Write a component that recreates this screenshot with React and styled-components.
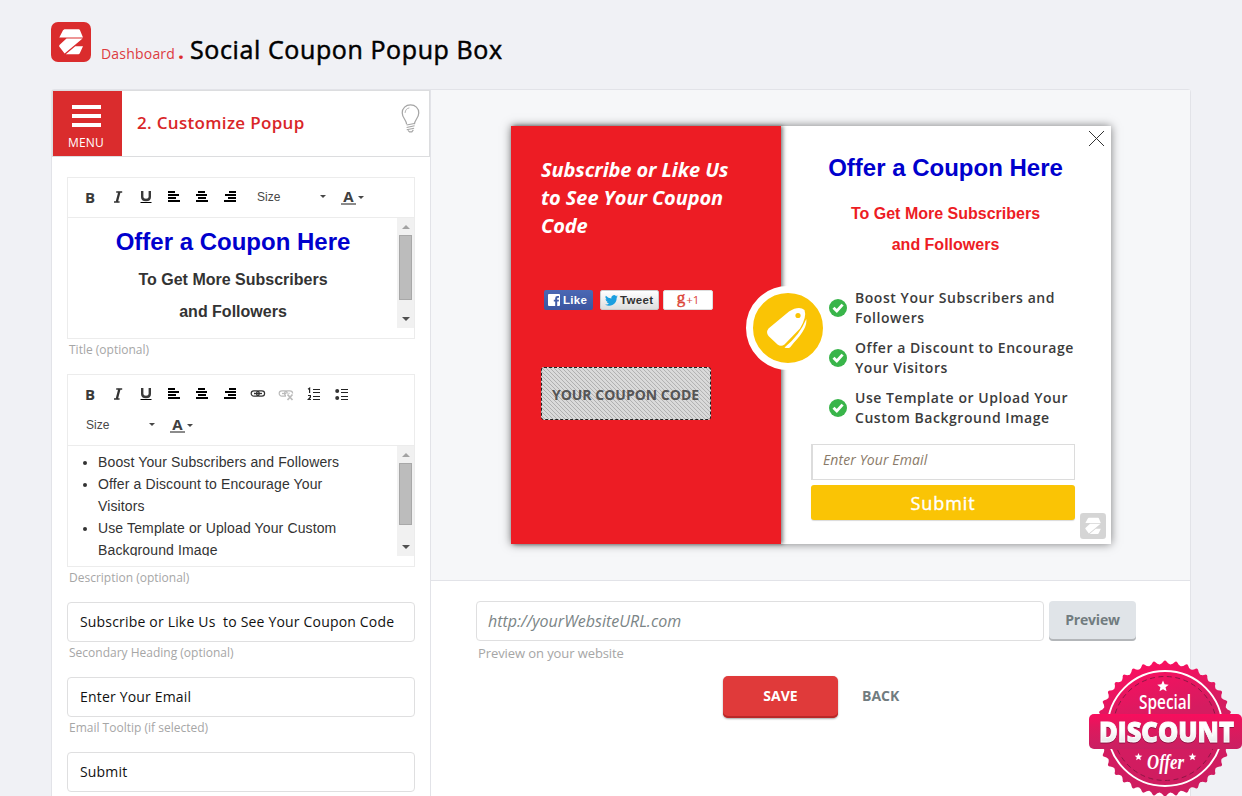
import React from "react";
import styled, { createGlobalStyle, css } from "styled-components";

const sans = `"Open Sans", "Noto Sans", sans-serif`;
const arial = `"Liberation Sans", Arial, sans-serif`;

const GlobalStyle = createGlobalStyle`
  * { box-sizing: border-box; }
  body {
    margin: 0;
    background: #f0f1f5;
    font-family: ${sans};
    overflow: hidden;
  }
`;

const Page = styled.div`
  width: 1242px;
  height: 796px;
  overflow: hidden;
`;

const Header = styled.header`
  display: flex;
  align-items: flex-start;
  height: 89px;
  padding: 22px 0 0 51px;
`;

const Crumbs = styled.div`
  display: flex;
  align-items: baseline;
  margin: 10px 0 0 10px;
  white-space: nowrap;
`;

const CrumbLink = styled.a`
  color: #dd3b3f;
  font-size: 14px;
  line-height: 34px;
  letter-spacing: 0.2px;
`;

const CrumbDot = styled.span`
  width: 5px;
  margin: 0 7px 0 3px;
  color: #dc2c2c;
  font-size: 21px;
  line-height: 34px;
  font-weight: 700;
`;

const PageTitle = styled.h1`
  margin: 0;
  color: #000;
  font-size: 25px;
  font-weight: 400;
  line-height: 34px;
  letter-spacing: 0.6px;
  -webkit-text-stroke: 0.5px #000;
`;

const Workspace = styled.main`
  display: flex;
  width: 1140px;
  height: 720px;
  margin-left: 51px;
  background: #fff;
  border: 1px solid #e2e3e8;
  border-radius: 3px;
`;

const Sidebar = styled.aside`
  flex: none;
  width: 379px;
  border-right: 1px solid #e2e3e8;
`;

const StepBar = styled.div`
  display: flex;
  height: 67px;
  border: 1px solid #dcdddf;
`;

const MenuButton = styled.button`
  display: flex;
  flex-direction: column;
  align-items: center;
  width: 69px;
  padding: 14px 0 0;
  background: #da2c2d;
  border: 0;
  color: #fff;
  font: 12px/16px ${sans};
  letter-spacing: 0.2px;
`;

const MenuBars = styled.span`
  display: flex;
  flex-direction: column;
  gap: 5px;
  margin: 0 3px 8px 0;
  i {
    width: 29px;
    height: 4px;
    background: #fff;
  }
`;

const MenuLabel = styled.span`
  margin-right: 3px;
`;

const StepTitle = styled.h2`
  flex: 1;
  margin: 0 0 0 15px;
  color: #d92628;
  font-size: 17px;
  font-weight: 600;
  line-height: 64px;
  letter-spacing: 0.32px;
`;

const BulbWrap = styled.div`
  padding: 12px 9px 0 0;
`;

const Fields = styled.div`
  padding: 20px 15px 0;
`;

const Editor = styled.div`
  width: 348px;
  height: ${(p) => p.$height}px;
  background: #fff;
  border: 1px solid #ececec;
`;

const Toolbar = styled.div`
  display: flex;
  flex-wrap: wrap;
  align-content: flex-start;
  height: ${(p) => p.$height}px;
  padding: 4px 8px 0;
  border-bottom: 1px solid #ececec;
`;

const Tool = styled.span`
  display: flex;
  align-items: center;
  justify-content: center;
  width: 28px;
  height: 30px;
  color: #333;
`;

const BoldGlyph = styled.span`
  color: #3a3a3a;
  font: 700 15px/20px ${sans};
`;

const SizeSelect = styled.span`
  display: flex;
  align-items: center;
  justify-content: space-between;
  width: 82px;
  height: ${(p) => (p.$offset ? 29 : 31)}px;
  margin-left: ${(p) => p.$offset || 0}px;
  padding: 0 3px 0 10px;
  color: #484848;
  font: 12px/14px ${arial};
`;

const Caret = styled.i`
  border: 3px solid transparent;
  border-top-color: #474747;
  border-bottom: 0;
`;

const ColorSelect = styled.span`
  display: flex;
  align-items: center;
  gap: 2px;
  height: ${(p) => (p.$compact ? 30 : 32)}px;
  margin-left: 12px;
`;

const ColorLetter = styled.span`
  width: 15px;
  height: 15px;
  border-bottom: 2px solid #8b8b8b;
  color: #404040;
  font: 700 15px/12px ${sans};
  text-align: center;
`;

const EditArea = styled.div`
  display: flex;
  height: 110px;
  overflow: hidden;
`;

const EditText = styled.div`
  flex: 1;
  color: #333;
  font-family: ${arial};
  white-space: nowrap;
`;

const Scrollbar = styled.div`
  display: flex;
  flex-direction: column;
  align-items: center;
  width: 17px;
  background: #f1f1f1;
`;

const ScrollThumb = styled.div`
  width: 13px;
  height: ${(p) => p.$height}px;
  margin-bottom: auto;
  background: #bcbcbc;
  border: 1px solid #a8a8a8;
`;

const ScrollArrow = styled.i`
  width: 8px;
  height: 4px;
  border: 4px solid transparent;
  ${(p) =>
    p.$up
      ? css`
          margin: 7px 0 6px;
          border-top: 0;
          border-bottom-color: #a3a3a3;
        `
      : css`
          margin: 0 0 7px;
          border-bottom: 0;
          border-top-color: #505050;
        `}
`;

const OfferTitle = styled.div`
  margin-bottom: ${(p) => p.$gap}px;
  color: #0000cd;
  font: 700 24px/28px ${arial};
  text-align: center;
`;

const OfferLine = styled.div`
  color: ${(p) => p.$color || "#333"};
  font: 700 16px/${(p) => p.$line || 32}px ${arial};
  text-align: center;
`;

const TitleText = styled(EditText)`
  padding: 10px 0 0 1px;
`;

const BulletList = styled.ul`
  margin: 5px 0 0;
  padding: 0 0 0 30px;
  color: #333;
  font: 14px/22px ${arial};
  letter-spacing: 0.13px;
`;

const Hint = styled.div`
  height: 22px;
  margin-bottom: 13px;
  padding-left: 2px;
  color: #a6a6a6;
  font-size: 12px;
  line-height: 22px;
  white-space: nowrap;
`;

const TextField = styled.div`
  width: 348px;
  height: 40px;
  padding-left: 12px;
  background: #fff;
  border: 1px solid #dfdfe0;
  border-radius: 4px;
  color: #111;
  font-size: 14px;
  line-height: 38px;
  letter-spacing: 0.18px;
  white-space: pre;
`;

const Content = styled.section`
  flex: 1;
  display: flex;
  flex-direction: column;
`;

const Stage = styled.div`
  height: 491px;
  padding: 36px 0 0 80px;
  background: #f6f7f9;
  border-bottom: 1px solid #e2e3e8;
`;

const Popup = styled.div`
  position: relative;
  display: flex;
  width: 600px;
  height: 418px;
  background: #fff;
  box-shadow: 0 0 9px rgba(0, 0, 0, 0.5);
`;

const PromoSide = styled.div`
  width: 270px;
  padding: 30px 30px 0;
  background: #ed1c24;
  box-shadow: 2px 0 4px rgba(0, 0, 0, 0.5);
`;

const PromoHeading = styled.div`
  height: 134px;
  color: #fff;
  font: italic 700 20px/28px ${sans};
  letter-spacing: -0.08px;
  white-space: nowrap;
`;

const SocialRow = styled.div`
  display: flex;
  height: 77px;
  padding-left: 3px;
`;

const SocialButton = styled.div`
  display: flex;
  align-items: center;
  height: 20px;
  border-radius: 2px;
  font: 700 11.5px/20px ${arial};
`;

const LikeButton = styled(SocialButton)`
  width: 49px;
  margin-right: 7px;
  padding-left: 4px;
  gap: 3px;
  background: linear-gradient(#4b68b4, #3b559f);
  color: #fff;
  letter-spacing: 0.3px;
`;

const TweetButton = styled(SocialButton)`
  width: 59px;
  margin-right: 4px;
  padding-left: 4px;
  gap: 2px;
  border: 1px solid #ccc;
  background: linear-gradient(#fff, #dedede);
  color: #333;
  letter-spacing: 0.35px;
`;

const PlusButton = styled(SocialButton)`
  width: 50px;
  justify-content: center;
  gap: 1px;
  background: #fff;
  border: 1px solid #ddd;
  color: #db4437;
  font: 11.5px/18px ${sans};
  b {
    margin-top: -4px;
    font: 17px/18px "Liberation Serif", serif;
    -webkit-text-stroke: 0.4px #db4437;
  }
`;

const CouponCode = styled.div`
  width: 170px;
  height: 53px;
  border: 1px dashed #222;
  border-radius: 3px;
  background: repeating-linear-gradient(
    45deg,
    #dadada 0,
    #dadada 1.6px,
    #b0b0b0 2.1px,
    #dadada 2.83px
  );
  color: #555;
  font-size: 14px;
  font-weight: 700;
  line-height: 53px;
  text-indent: -1px;
  text-align: center;
  white-space: nowrap;
`;

const TagBadge = styled.div`
  position: absolute;
  left: 235px;
  top: 160px;
  width: 84px;
  height: 84px;
  border: 7px solid #fff;
  border-radius: 50%;
  background: #fac405;
`;

const CloseMark = styled.svg`
  position: absolute;
  right: 7px;
  top: 5px;
`;

const CornerLogo = styled.div`
  position: absolute;
  right: 5px;
  bottom: 5px;
  line-height: 0;
`;

const FormSide = styled.div`
  width: 330px;
  padding: 28px 36px 0 30px;
`;

const FormHeading = styled.div`
  padding-left: 5px;
`;

const Benefits = styled.ul`
  height: 156px;
  margin: 0;
  padding: 28px 0 0 18px;
  list-style: none;
`;

const Benefit = styled.li`
  display: flex;
  align-items: center;
  gap: 8px;
  height: 40px;
  margin-bottom: 10px;
  color: #3b3b3b;
  font-size: 14px;
  font-weight: 600;
  line-height: 20px;
  letter-spacing: 0.55px;
  white-space: nowrap;
`;

const EmailInput = styled.div`
  height: 36px;
  margin: 28px 0 5px;
  padding-left: 10px;
  border: 1px solid #dcdcdc;
  border-left-width: 2px;
  color: #8a7a68;
  font: italic 14px/30px ${sans};
  letter-spacing: 0.1px;
`;

const SubmitButton = styled.div`
  height: 35px;
  background: #fac405;
  border-radius: 3px;
  box-shadow: 0 1px 1px rgba(0, 0, 0, 0.15);
  color: #fff;
  font-size: 18px;
  line-height: 37px;
  letter-spacing: 0.9px;
  text-align: center;
  -webkit-text-stroke: 0.4px #fff;
`;

const PreviewRow = styled.div`
  display: flex;
  padding: 20px 0 0 45px;
  gap: 5px;
`;

const UrlInput = styled.div`
  width: 568px;
  height: 40px;
  padding-left: 11px;
  border: 1px solid #dfdfe0;
  border-radius: 4px;
  color: #7b8586;
  font: italic 16px/38px ${sans};
`;

const PreviewButton = styled.div`
  width: 87px;
  height: 40px;
  background: #e0e4e8;
  border-radius: 4px;
  box-shadow: inset 0 -2px 0 #b3b6b9;
  color: #717c7f;
  font-size: 14px;
  font-weight: 700;
  letter-spacing: -0.2px;
  line-height: 38px;
  text-align: center;
`;

const PreviewHint = styled.div`
  padding-left: 47px;
  color: #a6a6a6;
  font-size: 13px;
  line-height: 24px;
  letter-spacing: -0.09px;
`;

const Actions = styled.div`
  display: flex;
  align-items: flex-start;
  gap: 24px;
  padding: 11px 0 0 292px;
  font-size: 14px;
  font-weight: 700;
  line-height: 40px;
`;

const SaveButton = styled.div`
  width: 115px;
  height: 42px;
  background: #e03a3a;
  border-radius: 5px;
  box-shadow: inset 0 -2px 0 #b92929, 0 1px 2px rgba(0, 0, 0, 0.35);
  color: #fff;
  text-align: center;
`;

const BackLink = styled.div`
  color: #717c7f;
`;

const SealWrap = styled.div`
  position: absolute;
  left: 1088px;
  top: 660px;
  width: 154px;
  height: 136px;
  overflow: hidden;
`;

const BandText = styled.text`
  font-family: ${sans};
  font-size: 29px;
  font-weight: 800;
  filter: drop-shadow(0 1.5px 0.5px #8e1545);
`;

function Logo({ size, color }) {
  return (
    <svg width={size} height={size} viewBox="0 0 40 40">
      <rect width="40" height="40" rx={size > 30 ? 7 : 5} fill={color} />
      <path
        d="M13.4 7.3H27.8Q28.6 7.4 29 8.2L32 15.5H8.3L12 8.3ZM15.5 16.4H31.6L13.6 31.6 8.2 24.4Q8 23.6 8.7 22.8ZM24.3 24.2H32L28.8 31.2Q28.2 32.3 27.4 32.3H14.8Z"
        fill="#fff"
      />
    </svg>
  );
}

function Bulb() {
  return (
    <svg width="19" height="31" viewBox="0 0 20 31" fill="none" stroke="#a5a5a5">
      <path
        strokeWidth="1.3"
        d="M5.9 21.5C5.6 16.8 1.3 14.8 1.3 9.6 1.3 4.6 5 1.2 10 1.2S18.7 4.6 18.7 9.6C18.7 14.8 14.4 16.8 14.1 21.5"
      />
      <path d="M4.3 9.6C4.5 6.5 6.2 4.8 8.8 4.3" strokeWidth="0.9" />
      <path d="M5.9 22.4 14 20.8M5.9 25 14.3 23.2M6 27.3 13.8 25.8M7.3 28 9 29.6H11.4L13 27.5" strokeWidth="1.2" />
    </svg>
  );
}

function Align({ x }) {
  return (
    <svg width="12" height="12" viewBox="0 0 12 12" fill="#000" shapeRendering="crispEdges">
      <rect x={x[0]} y="0" width="7" height="2" />
      <rect x={x[1]} y="3" width="11" height="2" />
      <rect x={x[2]} y="6" width="8" height="2" />
      <rect x="0" y="9" width="12" height="2" />
    </svg>
  );
}

function LinkIcon({ color, cross }) {
  return (
    <svg width="16" height="14" viewBox="0 0 16 14" fill="none" stroke={color} strokeWidth="1.2">
      <rect x="1.2" y="3.8" width="8" height="5.4" rx="2.7" />
      <rect x="6.6" y="3.8" width="8" height="5.4" rx="2.7" />
      <path d="M4 6.5h8" strokeWidth="1.3" />
      {cross && (
        <>
          <path d="M8 6.500H16V14H8Z" fill="#fff" stroke="none" />
          <path d="M9.500 7.500l5 5.500M14.500 7.500l-5 5.500" strokeWidth="1.7" />
        </>
      )}
    </svg>
  );
}

function FormatTools() {
  return (
    <>
      <Tool><BoldGlyph>B</BoldGlyph></Tool>
      <Tool>
        <svg width="14" height="16" viewBox="0 0 14 16">
          <path d="M5.2 3H11.2M3 13H8.6" stroke="#333" strokeWidth="1.7" fill="none" />
          <path d="M8.4 3 5.8 13" stroke="#333" strokeWidth="2.3" />
        </svg>
      </Tool>
      <Tool>
        <svg width="14" height="16" viewBox="0 0 14 16">
          <path d="M3.2 2V8Q3.2 11 7 11T10.8 8V2" stroke="#3a3a3a" strokeWidth="2.4" fill="none" />
          <path d="M1.5 13.5H12.5" stroke="#000" />
        </svg>
      </Tool>
      <Tool><Align x={[0, 0, 0]} /></Tool>
      <Tool><Align x={[2, 0, 2]} /></Tool>
      <Tool><Align x={[5, 1, 4]} /></Tool>
    </>
  );
}

function ListIcon({ numbered }) {
  return (
    <svg width="14" height="14" viewBox="0 0 14 14" fill="none" stroke="#222">
      <path d="M6 2.5h7M6 5.5h7M6 9.5h7M6 12.5h7" strokeWidth="1" shapeRendering="crispEdges" />
      {numbered ? (
        <path d="M1 2.2 2.6 1.2V6M1 8.5H3.4V10.2L1.3 12.5H4" strokeWidth="1.2" />
      ) : (
        <g fill="#333" stroke="none">
          <circle cx="2.2" cy="4" r="2" />
          <circle cx="2.2" cy="11" r="2" />
        </g>
      )}
    </svg>
  );
}

function SizeTools({ offset }) {
  return (
    <>
      <SizeSelect $offset={offset}>Size<Caret /></SizeSelect>
      <ColorSelect $compact={offset}><ColorLetter>A</ColorLetter><Caret /></ColorSelect>
    </>
  );
}

function Scroll({ thumb }) {
  return (
    <Scrollbar>
      <ScrollArrow $up />
      <ScrollThumb $height={thumb} />
      <ScrollArrow />
    </Scrollbar>
  );
}

function Check() {
  return (
    <svg width="18" height="18" viewBox="0 0 18 18">
      <circle cx="9" cy="9" r="9" fill="#39b54a" />
      <path d="M4.5 8.7 7.8 12 13.6 5.6" stroke="#fff" strokeWidth="2.9" fill="none" />
    </svg>
  );
}

const TEETH = 38;
const sealPath =
  Array.from({ length: TEETH }, (_, i) => {
    const at = (k, r) => {
      const a = ((i + k) / TEETH) * Math.PI * 2 - Math.PI / 2;
      return `${(77 + r * Math.cos(a)).toFixed(2)} ${(68.5 + r * Math.sin(a)).toFixed(2)}`;
    };
    return `${i ? "L" : "M"}${at(-0.5, 64.3)}Q${at(-0.25, 65)} ${at(-0.14, 67)}Q${at(0, 68.8)} ${at(0.14, 67)}Q${at(0.25, 65)} ${at(0.5, 64.3)}`;
  }).join("") + "Z";

const star = (cx, cy, r) =>
  Array.from({ length: 10 }, (_, i) => {
    const a = (i * Math.PI) / 5 - Math.PI / 2;
    const q = i % 2 ? r * 0.45 : r;
    return `${cx + q * Math.cos(a)},${cy + q * Math.sin(a)}`;
  }).join(" ");

function Seal() {
  return (
    <svg width="154" height="136" viewBox="0 0 154 136">
      <defs>
        <linearGradient id="seal" x1="0" y1="0" x2="0.25" y2="1">
          <stop offset="0.1" stopColor="#fa0f60" />
          <stop offset="0.5" stopColor="#d51c60" />
          <stop offset="1" stopColor="#cf1c60" />
        </linearGradient>
        <linearGradient id="band" x1="0" y1="0" x2="0" y2="1">
          <stop offset="0" stopColor="#f90d5d" />
          <stop offset="0.4" stopColor="#de195d" />
          <stop offset="1" stopColor="#c92062" />
        </linearGradient>
        <linearGradient id="letters" x1="0" y1="0" x2="0" y2="1">
          <stop offset="0.5" stopColor="#fff" />
          <stop offset="1" stopColor="#d8d8dc" />
        </linearGradient>
      </defs>
      <path d={sealPath} fill="url(#seal)" />
      <circle cx="77" cy="68.5" r="57.5" fill="none" stroke="#fff" strokeWidth="1.9" />
      <circle cx="77" cy="68.5" r="52" fill="none" stroke="#8c1744" strokeWidth="1" strokeDasharray="5 3.5" />
      <rect x="1" y="54" width="153" height="35" rx="5" fill="url(#band)" />
      <g fill="#fff">
        <polygon points={star(75, 26.5, 6)} />
        <polygon points={star(50.5, 97, 4)} />
        <polygon points={star(104.5, 97, 4)} />
      </g>
      <text x="51" y="48.5" fontFamily="Open Sans, sans-serif" fill="#fff" fontSize="20" fontWeight="600" textLength="52" lengthAdjust="spacingAndGlyphs">Special</text>
      <BandText x="11" y="82" textLength="135" lengthAdjust="spacingAndGlyphs" fill="url(#letters)" stroke="#fff" strokeWidth="0.9">DISCOUNT</BandText>
      <text x="59" y="109" fill="#fff" fontFamily="Liberation Serif, serif" fontStyle="italic" fontWeight="700" fontSize="21" textLength="37" lengthAdjust="spacingAndGlyphs">Offer</text>
    </svg>
  );
}

const BENEFITS = [
  ["Boost Your Subscribers and", "Followers"],
  ["Offer a Discount to Encourage", "Your Visitors"],
  ["Use Template or Upload Your", "Custom Background Image"],
];

function CouponPopup() {
  return (
    <Popup>
      <PromoSide>
        <PromoHeading>
          Subscribe or Like Us<br />to See Your Coupon<br />Code
        </PromoHeading>
        <SocialRow>
          <LikeButton>
            <svg width="12" height="12" viewBox="0 0 12 12">
              <rect width="12" height="12" rx="1" fill="#fff" />
              <path d="M7.2 12V7.6H5.8V5.8H7.2V4.3Q7.2 2 9.4 2H11V3.8H9.8Q9.2 3.8 9.2 4.5V5.8H11L10.7 7.6H9.2V12Z" fill="#405ba7" />
            </svg>
            Like
          </LikeButton>
          <TweetButton>
            <svg width="13" height="11" viewBox="0 0 24 20">
              <path
                fill="#1b9fe0"
                d="M24 2.4a10 10 0 0 1-2.8.8A5 5 0 0 0 23.3.5a10 10 0 0 1-3.1 1.2A4.9 4.9 0 0 0 11.8 6.1 14 14 0 0 1 1.7 1 4.9 4.9 0 0 0 3.2 7.6 5 5 0 0 1 1 7a4.9 4.9 0 0 0 3.9 4.9 5 5 0 0 1-2.2.1 4.9 4.9 0 0 0 4.6 3.4A9.9 9.9 0 0 1 0 17.5 14 14 0 0 0 21.5 5z"
              />
            </svg>
            Tweet
          </TweetButton>
          <PlusButton><b>g</b>+1</PlusButton>
        </SocialRow>
        <CouponCode>YOUR COUPON CODE</CouponCode>
      </PromoSide>
      <FormSide>
        <FormHeading>
          <OfferTitle $gap={16}>Offer a Coupon Here</OfferTitle>
          <OfferLine $color="#ed1c24" $line={31}>To Get More Subscribers</OfferLine>
          <OfferLine $color="#ed1c24" $line={31}>and Followers</OfferLine>
        </FormHeading>
        <Benefits>
          {BENEFITS.map(([a, b]) => (
            <Benefit key={a}><Check /><span>{a}<br />{b}</span></Benefit>
          ))}
        </Benefits>
        <EmailInput>Enter Your Email</EmailInput>
        <SubmitButton>Submit</SubmitButton>
      </FormSide>
      <TagBadge>
        <svg width="70" height="70" viewBox="0 0 70 70">
          <path
            d="M15.5 35.5 36 18.5Q46 12.5 51.500 17Q54 24 47 35.500L31.500 51.500Q28 54 24.500 51.500L16 43.500Q12.500 39.500 15.500 35.500ZM31.500 54.500Q46.500 42.500 53.300 26Q54.800 35 41 49.500L37 54.500Q34 55.500 31.500 54.500Z"
            fill="#fff"
          />
          <circle cx="45" cy="22.5" r="2.6" fill="#fac405" />
        </svg>
      </TagBadge>
      <CloseMark width="15" height="15" viewBox="0 0 15 15" stroke="#333" strokeWidth="1">
        <path d="M0 0 15 15M15 0 0 15" />
      </CloseMark>
      <CornerLogo><Logo size={26} color="#d5d5d5" /></CornerLogo>
    </Popup>
  );
}

export default function App() {
  return (
    <Page>
      <GlobalStyle />
      <Header>
        <Logo size={40} color="#da2c2d" />
        <Crumbs>
          <CrumbLink>Dashboard</CrumbLink>
          <CrumbDot>.</CrumbDot>
          <PageTitle>Social Coupon Popup Box</PageTitle>
        </Crumbs>
      </Header>
      <Workspace>
        <Sidebar>
          <StepBar>
            <MenuButton>
              <MenuBars><i /><i /><i /></MenuBars>
              <MenuLabel>MENU</MenuLabel>
            </MenuButton>
            <StepTitle>2. Customize Popup</StepTitle>
            <BulbWrap><Bulb /></BulbWrap>
          </StepBar>
          <Fields>
            <Editor $height={162}>
              <Toolbar $height={40}>
                <FormatTools />
                <SizeTools offset={3} />
              </Toolbar>
              <EditArea>
                <TitleText>
                  <OfferTitle $gap={8}>Offer a Coupon Here</OfferTitle>
                  <OfferLine>To Get More Subscribers</OfferLine>
                  <OfferLine>and Followers</OfferLine>
                </TitleText>
                <Scroll thumb={65} />
              </EditArea>
            </Editor>
            <Hint>Title (optional)</Hint>
            <Editor $height={193}>
              <Toolbar $height={71}>
                <FormatTools />
                <Tool><LinkIcon color="#333" /></Tool>
                <Tool><LinkIcon color="#bbb" cross /></Tool>
                <Tool><ListIcon numbered /></Tool>
                <Tool><ListIcon /></Tool>
                <SizeTools />
              </Toolbar>
              <EditArea>
                <EditText>
                  <BulletList>
                    <li>Boost Your Subscribers and Followers</li>
                    <li>Offer a Discount to Encourage Your<br />Visitors</li>
                    <li>Use Template or Upload Your Custom<br />Background Image</li>
                  </BulletList>
                </EditText>
                <Scroll thumb={62} />
              </EditArea>
            </Editor>
            <Hint>Description (optional)</Hint>
            <TextField>{"Subscribe or Like Us  to See Your Coupon Code"}</TextField>
            <Hint>Secondary Heading (optional)</Hint>
            <TextField>Enter Your Email</TextField>
            <Hint>Email Tooltip (if selected)</Hint>
            <TextField>Submit</TextField>
          </Fields>
        </Sidebar>
        <Content>
          <Stage><CouponPopup /></Stage>
          <PreviewRow>
            <UrlInput>http://yourWebsiteURL.com</UrlInput>
            <PreviewButton>Preview</PreviewButton>
          </PreviewRow>
          <PreviewHint>Preview on your website</PreviewHint>
          <Actions>
            <SaveButton>SAVE</SaveButton>
            <BackLink>BACK</BackLink>
          </Actions>
        </Content>
      </Workspace>
      <SealWrap><Seal /></SealWrap>
    </Page>
  );
}
